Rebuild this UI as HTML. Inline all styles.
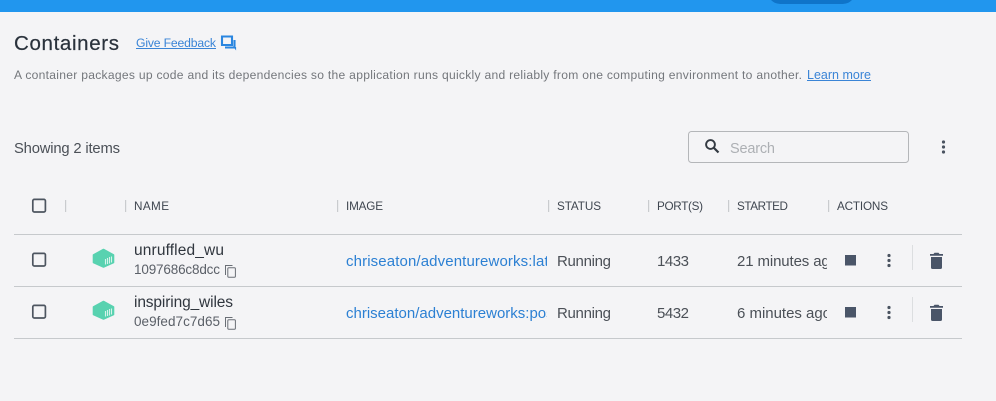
<!DOCTYPE html>
<html>
<head>
<meta charset="utf-8">
<style>
html,body{margin:0;padding:0;background:#f4f4f6;width:996px;height:401px;overflow:hidden}
svg{display:block}
text{font-family:"Liberation Sans",sans-serif;white-space:pre}
.h{font-size:11.7px;fill:#3f4650}
.t{font-size:15px;fill:#4b5057}
.n{font-size:15.5px;fill:#30363e}
.id{font-size:13.5px;fill:#5b6068}
.l{font-size:15px;fill:#2c80d3}
</style>
</head>
<body>
<svg width="996" height="401" viewBox="0 0 996 401" xmlns="http://www.w3.org/2000/svg">
<defs>
<clipPath id="c1"><rect x="346" y="240" width="201" height="90"/></clipPath>
<clipPath id="c2"><rect x="737" y="240" width="90" height="90"/></clipPath>
<g id="kebab" fill="#4a5360"><circle cx="0" cy="-5" r="1.6"/><circle cx="0" cy="0" r="1.6"/><circle cx="0" cy="5" r="1.6"/></g>
<g id="box"><rect x="32.8" y="0.9" width="12.6" height="12.6" rx="1.5" fill="none" stroke="#4d5560" stroke-width="1.7"/></g>
<g id="whale">
<path d="M93.5 255 103.5 249.5 113.5 255V262.5L103.5 267 93.5 262.5Z" fill="#58d2b0" stroke="#58d2b0" stroke-width="1.6" stroke-linejoin="round"/>
<path d="M105.5 259v5.5M107.5 258v6M109.5 257v6.5M111.5 256.5v6" stroke="#d6f3ea" stroke-width="1.1" fill="none"/>
</g>
<g id="copy" fill="none" stroke="#6a6f76" stroke-width="1">
<path d="M225.5 275V265.5H232.5"/>
<rect x="227.8" y="267.8" width="7.6" height="9.4" rx="1"/>
</g>
<g id="trash" fill="#4a5568">
<path d="M930 254h3.5l1-1.2h4l1 1.2h3.5v1.8h-13z"/>
<path d="M931 257h11v10.4a1.6 1.6 0 0 1-1.6 1.6h-7.8a1.6 1.6 0 0 1-1.6-1.6z"/>
</g>
</defs>

<rect width="996" height="401" fill="#f4f4f6"/>
<rect width="996" height="12" fill="#2196ee"/>
<path d="M771 0h81c-3 3-6 4-11 4h-59c-5 0-8-1-11-4z" fill="#0f74c9"/>

<text x="14" y="50" font-size="20.5" fill="#2a323c" stroke="#2a323c" stroke-width=".2" textLength="105" lengthAdjust="spacing">Containers</text>
<text x="136" y="47" font-size="12.2" fill="#3a84d6" textLength="80" lengthAdjust="spacing">Give Feedback</text>
<rect x="136" y="48" width="80" height="1" fill="#3a84d6"/>
<g fill="none" stroke="#2a86e0" stroke-width="2.1">
<path d="M222 36.5H232V45H222Z"/>
<path d="M225 47.5H234.5V40"/>
</g>
<path d="M233.5 47h2.6v3.5z" fill="#2a86e0"/>

<text x="14" y="79" font-size="12.1" fill="#74777c" textLength="788" lengthAdjust="spacing">A container packages up code and its dependencies so the application runs quickly and reliably from one computing environment to another.</text>
<text x="807" y="79" font-size="12.5" fill="#3a84d6" textLength="64" lengthAdjust="spacing">Learn more</text>
<rect x="807" y="80" width="64" height="1" fill="#3a84d6"/>

<text x="14" y="153" font-size="14.8" fill="#4b5057" textLength="106" lengthAdjust="spacing">Showing 2 items</text>

<rect x="688.5" y="131.5" width="220" height="31" rx="3" fill="#f4f4f6" stroke="#b4b6b9"/>
<circle cx="710.5" cy="144.5" r="4.4" fill="none" stroke="#333a42" stroke-width="1.9"/>
<path d="M714 148 718.5 152.5" stroke="#333a42" stroke-width="2.2" fill="none"/>
<text x="730" y="153" font-size="14.5" fill="#adb0b4" textLength="45" lengthAdjust="spacing">Search</text>
<use href="#kebab" x="943.5" y="147"/>

<use href="#box" y="198.5"/>
<g fill="#c9cbce">
<rect x="65" y="200" width="1.2" height="12"/>
<rect x="125" y="200" width="1.2" height="12"/>
<rect x="337" y="200" width="1.2" height="12"/>
<rect x="548" y="200" width="1.2" height="12"/>
<rect x="648" y="200" width="1.2" height="12"/>
<rect x="728" y="200" width="1.2" height="12"/>
<rect x="828" y="200" width="1.2" height="12"/>
</g>
<text class="h" x="134" y="210" textLength="35" lengthAdjust="spacing">NAME</text>
<text class="h" x="346" y="210" textLength="37" lengthAdjust="spacing">IMAGE</text>
<text class="h" x="557" y="210" textLength="44" lengthAdjust="spacing">STATUS</text>
<text class="h" x="657" y="210" textLength="46" lengthAdjust="spacing">PORT(S)</text>
<text class="h" x="737" y="210" textLength="51" lengthAdjust="spacing">STARTED</text>
<text class="h" x="837" y="210" textLength="51" lengthAdjust="spacing">ACTIONS</text>

<g fill="#c6c9cc">
<rect x="14" y="234" width="948" height="1"/>
<rect x="14" y="286" width="948" height="1"/>
<rect x="14" y="338" width="948" height="1"/>
</g>

<!-- row 1 -->
<use href="#box" y="252.5"/>
<use href="#whale"/>
<text class="n" x="134" y="255" textLength="90" lengthAdjust="spacing">unruffled_wu</text>
<text class="id" x="134" y="274" textLength="86" lengthAdjust="spacing">1097686c8dcc</text>
<use href="#copy"/>
<g clip-path="url(#c1)"><text class="l" x="346" y="266" textLength="223" lengthAdjust="spacing">chriseaton/adventureworks:latest</text></g>
<text class="t" x="557" y="266" textLength="54" lengthAdjust="spacing">Running</text>
<text class="t" x="657" y="266" textLength="32" lengthAdjust="spacing">1433</text>
<g clip-path="url(#c2)"><text class="t" x="737" y="266" textLength="101" lengthAdjust="spacing">21 minutes ago</text></g>
<rect x="845" y="255" width="11" height="10.5" fill="#4a5568"/>
<use href="#kebab" x="889" y="260.5"/>
<rect x="912" y="245" width="1" height="25" fill="#dcdee0"/>
<use href="#trash"/>

<!-- row 2 -->
<use href="#box" y="304.5"/>
<use href="#whale" y="52"/>
<text class="n" x="134" y="307" textLength="99" lengthAdjust="spacing">inspiring_wiles</text>
<text class="id" x="134" y="326" textLength="86" lengthAdjust="spacing">0e9fed7c7d65</text>
<use href="#copy" y="52"/>
<g clip-path="url(#c1)"><text class="l" x="346" y="318" textLength="241" lengthAdjust="spacing">chriseaton/adventureworks:postgres</text></g>
<text class="t" x="557" y="318" textLength="54" lengthAdjust="spacing">Running</text>
<text class="t" x="657" y="318" textLength="32" lengthAdjust="spacing">5432</text>
<g clip-path="url(#c2)"><text class="t" x="737" y="318" textLength="94" lengthAdjust="spacing">6 minutes ago</text></g>
<rect x="845" y="307" width="11" height="10.5" fill="#4a5568"/>
<use href="#kebab" x="889" y="312.5"/>
<rect x="912" y="297" width="1" height="25" fill="#dcdee0"/>
<use href="#trash" y="52"/>
</svg>
</body>
</html>
